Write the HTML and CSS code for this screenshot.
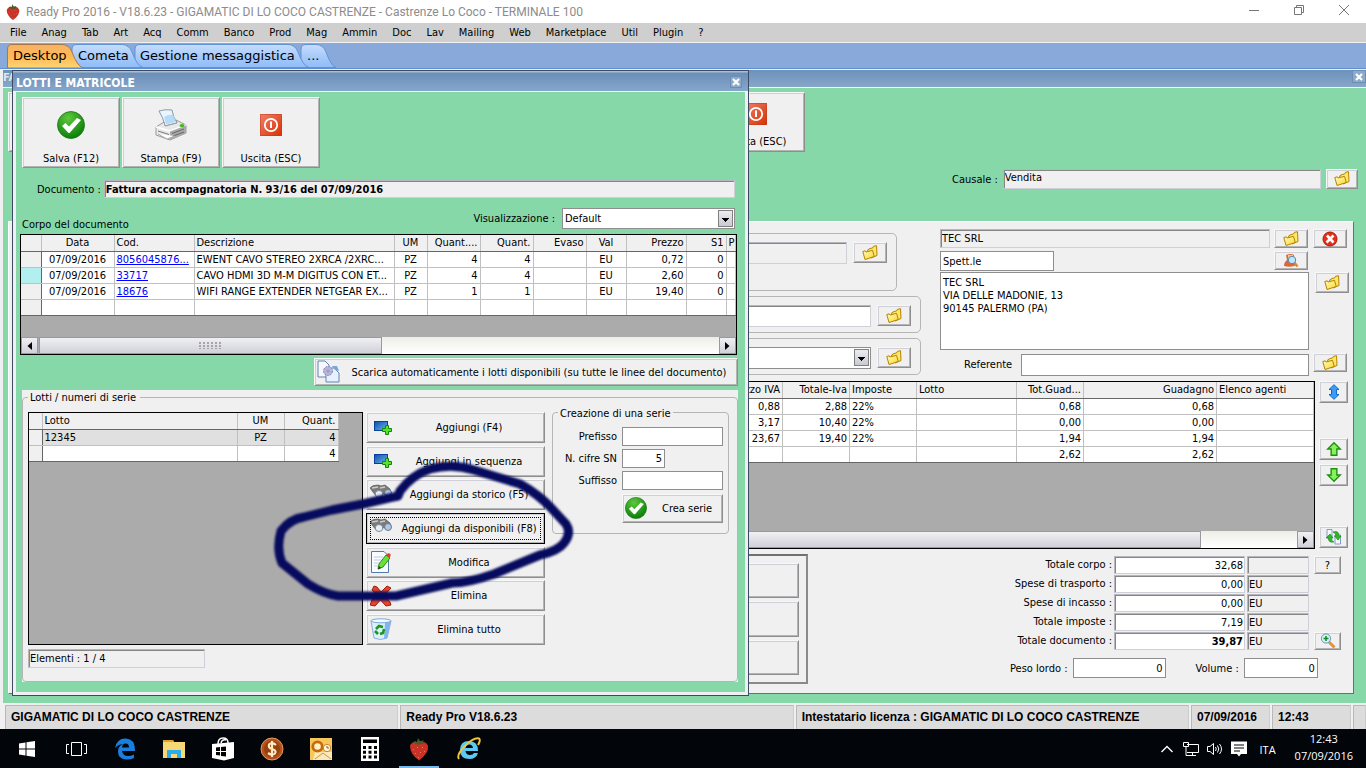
FILE: index.html
```html
<!DOCTYPE html>
<html lang="it">
<head>
<meta charset="utf-8">
<title>Ready Pro 2016</title>
<link rel="stylesheet" href="styles.css">
</head>
<body>
<svg class="defs" aria-hidden="true">
  <defs>
    <linearGradient id="gYellow" x1="0" y1="0" x2="1" y2="1"><stop offset="0" stop-color="#fffbc8"/><stop offset="1" stop-color="#fbd722"/></linearGradient>
    <linearGradient id="gRed" x1="0" y1="0" x2="1" y2="1"><stop offset="0" stop-color="#f0806a"/><stop offset="1" stop-color="#d83000"/></linearGradient>
    <radialGradient id="gGreen" cx=".4" cy=".25" r=".8"><stop offset="0" stop-color="#5cc83c"/><stop offset="1" stop-color="#067a06"/></radialGradient>
    <linearGradient id="gBlue" x1="0" y1="0" x2="1" y2="1"><stop offset="0" stop-color="#0b4fae"/><stop offset="1" stop-color="#6db4f2"/></linearGradient>
    <linearGradient id="gTab" x1="0" y1="0" x2="0" y2="1"><stop offset="0" stop-color="#c6ddfd"/><stop offset=".5" stop-color="#a9cbfa"/><stop offset="1" stop-color="#8fbcf8"/></linearGradient>
    <linearGradient id="gTabOn" x1="0" y1="0" x2="0" y2="1"><stop offset="0" stop-color="#f8b168"/><stop offset=".5" stop-color="#fdb955"/><stop offset="1" stop-color="#fdd670"/></linearGradient>
  </defs>
  <symbol id="i-folder" viewBox="0 0 16 16"><path d="M5.500 5 L8 3.500 L10.500 3 L11.500 1.300 L14.500 .7 L15 10.500 L9 13Z" fill="#fbe76a" stroke="#b58300"/><path d="M.8 6.500 L3.300 5.800 L4 7 L10.500 5.300 L12.300 11.500 L3 14.500Z" fill="url(#gYellow)" stroke="#b58300"/></symbol>
  <symbol id="i-power" viewBox="0 0 22 22"><rect width="22" height="22" rx="1.500" fill="url(#gRed)" stroke="#b83a1c"/><circle cx="11" cy="11" r="6.200" fill="none" stroke="#fff" stroke-width="1.800"/><path d="M11 7.500V14" stroke="#fff" stroke-width="2"/></symbol>
  <symbol id="i-check" viewBox="0 0 28 28"><circle cx="14" cy="14" r="13.500" fill="url(#gGreen)" stroke="#147a10" stroke-width=".8"/><path d="M5 15 L8.500 12 L12 15.500 L20 7 L24 9 L13 21.500 Q12 22.500 11 21.500Z" fill="#fff"/></symbol>
  <symbol id="i-printer" viewBox="0 0 32 32"><path d="M4 2 Q10 0 17 1 Q18 8 22 14 L10 17 Q8 8 4 2Z" fill="#eaf6ff" stroke="#8a99a8"/><path d="M9 8 Q14 5 18 6 L21 13 L11 15.500Z" fill="#b4dcf7"/><path d="M1 18 L9 13 L10 17 L22 14 L21 11 L31 16 L31 24 L15 31 L1 26Z" fill="#e9e9e9" stroke="#999"/><path d="M1 18 L15 22 L31 16" fill="none" stroke="#fff" stroke-width="1.500"/><path d="M15 22.500 L31 16.500 L31 24 L15 31Z" fill="#a9a9a9"/><path d="M17 24.500 L29 20 M17 27.500 L29 23" stroke="#666"/><path d="M3 22 L14 25.500" stroke="#777"/><path d="M3 25 L12 30 L20 27" fill="#fff" stroke="#aaa"/><ellipse cx="27" cy="16.500" rx="2.500" ry="1.500" fill="#40b818"/></symbol>
  <symbol id="i-add" viewBox="0 0 18 14"><rect x=".5" y=".5" width="13" height="9" fill="url(#gBlue)" stroke="#0a3f96"/><path d="M11.500 4.500h3v3h3v3h-3v3h-3v-3h-3v-3h3z" fill="#57e230" stroke="#148408"/></symbol>
  <symbol id="i-bino" viewBox="0 0 22 15"><path d="M0 4 Q2 1 8 1 L11 2 L15 1 L20 5 L21 9 L14 10 L9 8 L7 13 L3 8Z" fill="#7b7b7b" stroke="#555" stroke-width=".7"/><path d="M2 4 L8 3 M10 4 L15 3" stroke="#ccc" stroke-width="1.500"/><ellipse cx="9" cy="10" rx="3.800" ry="3.500" fill="#e0efff" stroke="#888"/><ellipse cx="18" cy="9" rx="3.500" ry="3.500" fill="#a9c8f3" stroke="#777"/></symbol>
  <symbol id="i-edit" viewBox="0 0 20 22"><path d="M.5 .5H13L17.500 5V21.500H.500Z" fill="#f8fbff" stroke="#5278ae"/><path d="M3 6h9M3 9h9M3 12h6M3 15h4" stroke="#c3cad9"/><path d="M7 18 L8 13 L15 4 L19 7 L12 16Z" fill="#6be038" stroke="#2c8c14"/><path d="M7 18.500 L8 15 L10 17Z" fill="#333"/><path d="M15 4 Q17 1 19.500 3 Q20 5 18.500 7Z" fill="#e23b28"/></symbol>
  <symbol id="i-cross" viewBox="0 0 22 22"><path d="M4 1 L7 2 L11 7 L17 1 L21 3 L14 10.500 L20 17 L21 20 L16 21 L10.500 15 L5 21 L0 20 L2 15 L7 10.500 L2 5Z" fill="#ea4426" stroke="#9c2010"/></symbol>
  <symbol id="i-bin" viewBox="0 0 22 22"><path d="M1 3 L4 20 Q10 23 17 20 L21 3Z" fill="#ddeeff" stroke="#87b0dd"/><path d="M15 5 L21 3 L17 20 L14 21Z" fill="#7fb6ec"/><ellipse cx="11" cy="2.800" rx="10" ry="2" fill="#f5faff" stroke="#7aa8dc"/><path d="M6 11 L9 8 L13 9 M14 11 L13 15 L10 16 M8 16 L5 13" fill="none" stroke="#179a17" stroke-width="2.600"/></symbol>
  <symbol id="i-pages" viewBox="0 0 24 24"><path d="M1 1H8L12 5V17H1Z" fill="#f5f9ff" stroke="#6581b4"/><path d="M9 8H17L22 13V22H9Z" fill="#e8f2ff" stroke="#6581b4"/><path d="M15 6 L20 6 L22 11 L18 10" fill="#7aa5da"/><circle cx="11" cy="11" r="4.500" fill="#b6b4d8" stroke="#8987b6" stroke-dasharray="2 1"/><circle cx="11" cy="11" r="1.500" fill="#9c9ac4"/></symbol>
  <symbol id="i-stop" viewBox="0 0 16 16"><circle cx="8" cy="8" r="7" fill="#e3301c" stroke="#b81404"/><path d="M5 4.500l6.500 7M11.500 4.500L4.500 11.500" stroke="#fff" stroke-width="2.600"/></symbol>
  <symbol id="i-person" viewBox="0 0 16 16"><path d="M3 2 Q8 0 11 2 V6 L14 12 Q8 15 1 13 Q1 9 4 7Z" fill="#d8673a"/><rect x="5" y="2" width="5" height="5" fill="#f3c78a"/><circle cx="9" cy="7" r="3.700" fill="#bfe5fb" stroke="#5c87a6"/><path d="M11.500 10 L14.500 13.500" stroke="#e0862a" stroke-width="2.500"/></symbol>
  <symbol id="i-updown" viewBox="0 0 12 16"><path d="M6 .7 L11 5.500 H8.500 V10.500 H11 L6 15.300 L1 10.500 H3.500 V5.500 H1Z" fill="#3a9cf5" stroke="#1768c0"/></symbol>
  <symbol id="i-up" viewBox="0 0 14 14"><path d="M7 1.500 L12.500 7 H9.500 V12.500 H4.500 V7 H1.500Z" fill="#86f25a" stroke="#1f8d10" stroke-width="1.200"/></symbol>
  <symbol id="i-swap" viewBox="0 0 16 16"><path d="M1 .5H6V9H1ZM9 6H14.500V15H9Z" fill="#f4f8ff" stroke="#7f9cc6"/><path d="M0 9 L4 5 L7 9 H5.500 Q5 12 8 13 Q2 14 2.500 9Z M15 7 L12 11 L8.500 7 H10 Q10 4 7 3 Q13 1 13 7Z" fill="#30b828" stroke="#158010" stroke-width=".6"/></symbol>
  <symbol id="i-zoomin" viewBox="0 0 16 16"><path d="M9 9 L14.500 14.500" stroke="#e0943a" stroke-width="3"/><circle cx="6" cy="5.500" r="4.600" fill="#d4efff" stroke="#6d97ac"/><path d="M6 3v5M3.500 5.500h5" stroke="#159020" stroke-width="1.600"/></symbol>
  <symbol id="i-berry" viewBox="0 0 20 24"><path d="M1 9 Q2 4 9 6 Q17 3 19 9 Q20 16 10 23.500 Q1 17 1 9Z" fill="#c93326"/><path d="M4 12l1 1M8 10l1 1M13 10l1 1M6 16l1 1M11 15l1 1M15 14l1 1M9 20l1 1" stroke="#e8776a"/><path d="M3 6 L6 4 L8 5 L9 1 L11 4 L15 3.500 L14 5 L17 6.500 L12 7 L9 8 L7 6.500Z" fill="#4c5a2a"/></symbol>
  <symbol id="i-x" viewBox="0 0 8 8"><path d="M1 1l6 6M7 1L1 7" stroke="#fff" stroke-width="2.200"/></symbol>
  <symbol id="i-left" viewBox="0 0 5 8"><path d="M5 0V8L.5 4Z"/></symbol>
  <symbol id="i-right" viewBox="0 0 5 8"><path d="M0 0V8L4.500 4Z"/></symbol>
</svg>

<div class="app">
  <header class="titlebar">
    <svg class="ic-berry"><use href="#i-berry"/></svg>
    <h1>Ready Pro 2016 - V18.6.23 - GIGAMATIC DI LO COCO CASTRENZE - Castrenze Lo Coco - TERMINALE 100</h1>
    <div class="winbtns">
      <button aria-label="Riduci"><svg viewBox="0 0 10 10"><path d="M0 5.500h10"/></svg></button>
      <button aria-label="Ripristina"><svg viewBox="0 0 10 10"><path d="M.5 2.500h7v7h-7zM2.500 2.500v-2h7v7h-2"/></svg></button>
      <button aria-label="Chiudi"><svg viewBox="0 0 10 10"><path d="M0 0l10 10M10 0L0 10"/></svg></button>
    </div>
  </header>

  <nav class="menu">
    <button>File</button><button>Anag</button><button>Tab</button><button>Art</button><button>Acq</button><button>Comm</button><button>Banco</button><button>Prod</button><button>Mag</button><button>Ammin</button><button>Doc</button><button>Lav</button><button>Mailing</button><button>Web</button><button>Marketplace</button><button>Util</button><button>Plugin</button><button>?</button>
  </nav>

  <nav class="tabs">
    <svg class="tabshapes" viewBox="0 0 340 25" width="340" height="25" aria-hidden="true">
      <path d="M301 24.500V6Q301 1.500 306 1.500H316Q323 1.500 326 9Q331 23 336 24.500Z" fill="url(#gTab)" stroke="#5f93d8"/>
      <path d="M135 24.500V6Q135 1.500 140 1.500H288Q295 1.500 298 9Q303 23 309 24.500Z" fill="url(#gTab)" stroke="#5f93d8"/>
      <path d="M72 24.500V6Q72 1.500 77 1.500H122Q129 1.500 132 9Q137 23 143 24.500Z" fill="url(#gTab)" stroke="#5f93d8"/>
      <path d="M7.500 25V6Q7.500 1.500 12 1.500H62Q69 1.500 72 9Q77 23 83 25Z" fill="url(#gTabOn)" stroke="#a8784a"/>
    </svg>
    <button class="t1">Desktop</button><button class="t2">Cometa</button><button class="t3">Gestione messaggistica</button><button class="t4">...</button>
  </nav>

  <main class="mdi">
    <section class="win">
      <div class="wintitle"><h2>FA</h2><button class="close" aria-label="Chiudi documento"><svg><use href="#i-x"/></svg></button></div>
      <div class="winbody">
        <div class="tools back">
          <span class="stub raised"></span>
          <button class="tool raised"><svg class="ic22"><use href="#i-power"/></svg><span>Uscita (ESC)</span></button>
        </div>
        <div class="causale">
          <label for="causale">Causale :</label>
          <input id="causale" class="sunk" value="Vendita" readonly>
          <button class="raised mini" aria-label="Scegli causale"><svg class="ic16"><use href="#i-folder"/></svg></button>
        </div>
        <div class="sheet">
          <div class="upper">
            <div class="groups">
              <div class="grp g1"><input class="sunk" aria-label="Numero" readonly><button class="raised mini" aria-label="Apri"><svg class="ic16"><use href="#i-folder"/></svg></button></div>
              <div class="grp g2"><input class="sunk white" aria-label="Pagamento"><button class="raised mini" aria-label="Apri"><svg class="ic16"><use href="#i-folder"/></svg></button></div>
              <div class="grp g3"><select class="combo" aria-label="Listino"><option></option></select><button class="raised mini" aria-label="Apri"><svg class="ic16"><use href="#i-folder"/></svg></button></div>
            </div>
            <div class="client">
              <input class="sunk name" aria-label="Cliente" value="TEC SRL" readonly>
              <button class="raised mini" aria-label="Scegli cliente"><svg class="ic16"><use href="#i-folder"/></svg></button>
              <button class="raised mini" aria-label="Togli cliente"><svg class="ic16"><use href="#i-stop"/></svg></button>
              <input class="flat short" aria-label="Titolo" value="Spett.le">
              <button class="raised mini" aria-label="Dettagli cliente"><svg class="ic16"><use href="#i-person"/></svg></button>
              <span></span>
              <textarea class="flat wide" aria-label="Indirizzo">TEC SRL
VIA DELLE MADONIE, 13
90145 PALERMO (PA)</textarea>
              <button class="raised mini off" aria-label="Scegli indirizzo"><svg class="ic16"><use href="#i-folder"/></svg></button>
              <div class="wide ref"><label for="ref">Referente</label><input id="ref" class="flat"></div>
              <button class="raised mini" aria-label="Scegli referente"><svg class="ic16"><use href="#i-folder"/></svg></button>
            </div>
          </div>
          <div class="middle">
            <div class="grid">
              <table>
                <colgroup><col><col class="w67"><col class="w67"><col class="w67"><col class="w100"><col class="w67"><col class="w133"><col class="w97"></colgroup>
                <thead><tr><th></th><th class="r">Prezzo IVA</th><th class="r">Totale-Iva</th><th>Imposte</th><th>Lotto</th><th class="r">Tot.Guad...</th><th class="r">Guadagno</th><th>Elenco agenti</th></tr></thead>
                <tbody>
                  <tr><td></td><td class="r">0,88</td><td class="r">2,88</td><td>22%</td><td></td><td class="r">0,68</td><td class="r">0,68</td><td></td></tr>
                  <tr><td></td><td class="r">3,17</td><td class="r">10,40</td><td>22%</td><td></td><td class="r">0,00</td><td class="r">0,00</td><td></td></tr>
                  <tr><td></td><td class="r">23,67</td><td class="r">19,40</td><td>22%</td><td></td><td class="r">1,94</td><td class="r">1,94</td><td></td></tr>
                  <tr><td></td><td></td><td></td><td></td><td></td><td class="r">2,62</td><td class="r">2,62</td><td></td></tr>
                </tbody>
              </table>
              <div class="hscroll"><span class="thumb long"></span><span class="track"></span><button aria-label="Scorri a destra"><svg><use href="#i-right"/></svg></button></div>
            </div>
            <div class="side">
              <button class="raised mini" aria-label="Espandi"><svg class="ic16"><use href="#i-updown"/></svg></button>
              <button class="raised mini" aria-label="Sposta su"><svg class="ic16"><use href="#i-up"/></svg></button>
              <button class="raised mini" aria-label="Sposta giù"><svg class="ic16 flip"><use href="#i-up"/></svg></button>
              <button class="raised mini" aria-label="Scambia"><svg class="ic16"><use href="#i-swap"/></svg></button>
            </div>
          </div>
          <div class="lower">
            <div class="stack"><span class="raised"></span><span class="raised"></span><span class="raised"></span></div>
            <div class="totals">
              <div class="sums">
                <label for="s1">Totale corpo :</label><input id="s1" class="sunk white r" value="32,68"><input class="sunk" aria-label="Valuta corpo" readonly><button class="raised mini">?</button>
                <label for="s2">Spese di trasporto :</label><input id="s2" class="sunk white r" value="0,00"><input class="sunk" aria-label="Valuta trasporto" value="EU" readonly><span></span>
                <label for="s3">Spese di incasso :</label><input id="s3" class="sunk white r" value="0,00"><input class="sunk" aria-label="Valuta incasso" value="EU" readonly><span></span>
                <label for="s4">Totale imposte :</label><input id="s4" class="sunk white r" value="7,19"><input class="sunk" aria-label="Valuta imposte" value="EU" readonly><span></span>
                <label for="s5">Totale documento :</label><input id="s5" class="sunk white r b" value="39,87"><input class="sunk" aria-label="Valuta documento" value="EU" readonly><button class="raised mini" aria-label="Ingrandisci"><svg class="ic16"><use href="#i-zoomin"/></svg></button>
              </div>
              <div class="weights">
                <label for="peso">Peso lordo :</label><input id="peso" class="flat r" value="0">
                <label for="vol" class="vol">Volume :</label><input id="vol" class="flat r v" value="0">
              </div>
            </div>
          </div>
        </div>
      </div>
    </section>

    <section class="dialog" role="dialog" aria-labelledby="dlgtitle">
      <div class="dlghead"><h2 id="dlgtitle">LOTTI E MATRICOLE</h2><button class="close" aria-label="Chiudi"><svg><use href="#i-x"/></svg></button></div>
      <div class="dlgbody">
        <div class="tools">
          <button class="tool raised"><svg class="ic28"><use href="#i-check"/></svg><span>Salva (F12)</span></button>
          <button class="tool raised"><svg class="ic32"><use href="#i-printer"/></svg><span>Stampa (F9)</span></button>
          <button class="tool raised"><svg class="ic22"><use href="#i-power"/></svg><span>Uscita (ESC)</span></button>
        </div>
        <div class="docrow"><label for="doc">Documento :</label><input id="doc" class="sunk b" value="Fattura accompagnatoria N. 93/16 del 07/09/2016" readonly></div>
        <div class="viewrow"><span class="cap">Corpo del documento</span><label for="vis">Visualizzazione :</label><select id="vis" class="combo"><option>Default</option></select></div>
        <div class="grid first">
          <table>
            <colgroup><col class="w20"><col class="w73"><col class="w80"><col class="w200"><col class="w33"><col class="w53"><col class="w53"><col class="w53"><col class="w40"><col class="w60"><col class="w40"><col></colgroup>
            <thead><tr><th></th><th class="c">Data</th><th>Cod.</th><th>Descrizione</th><th class="c">UM</th><th class="r">Quant....</th><th class="r">Quant.</th><th class="r">Evaso</th><th class="c">Val</th><th class="r">Prezzo</th><th class="r">S1</th><th>P</th></tr></thead>
            <tbody>
              <tr><th></th><td class="c">07/09/2016</td><td><a href="#">8056045876...</a></td><td>EWENT CAVO STEREO 2XRCA /2XRC...</td><td class="c">PZ</td><td class="r">4</td><td class="r">4</td><td></td><td class="c">EU</td><td class="r">0,72</td><td class="r">0</td><td></td></tr>
              <tr><th class="cur"></th><td class="c">07/09/2016</td><td><a href="#">33717</a></td><td>CAVO HDMI 3D M-M DIGITUS CON ET...</td><td class="c">PZ</td><td class="r">4</td><td class="r">4</td><td></td><td class="c">EU</td><td class="r">2,60</td><td class="r">0</td><td></td></tr>
              <tr><th></th><td class="c">07/09/2016</td><td><a href="#">18676</a></td><td>WIFI RANGE EXTENDER NETGEAR EX...</td><td class="c">PZ</td><td class="r">1</td><td class="r">1</td><td></td><td class="c">EU</td><td class="r">19,40</td><td class="r">0</td><td></td></tr>
              <tr><th></th><td></td><td></td><td></td><td></td><td></td><td></td><td></td><td></td><td></td><td></td><td></td></tr>
            </tbody>
          </table>
          <div class="hscroll"><button aria-label="Scorri a sinistra"><svg><use href="#i-left"/></svg></button><span class="thumb"><i class="grip"></i></span><span class="track"></span><button aria-label="Scorri a destra"><svg><use href="#i-right"/></svg></button></div>
        </div>
        <button class="raised auto"><svg class="ic24"><use href="#i-pages"/></svg><span>Scarica automaticamente i lotti disponibili (su tutte le linee del documento)</span></button>
        <fieldset class="lots">
          <legend>Lotti / numeri di serie</legend>
          <div class="lotcol">
            <div class="grid lotgrid">
              <table>
                <colgroup><col class="w13"><col class="w195"><col class="w47"><col class="w54"></colgroup>
                <thead><tr><th></th><th>Lotto</th><th class="c">UM</th><th class="r">Quant.</th></tr></thead>
                <tbody>
                  <tr class="sel"><th></th><td>12345</td><td class="c">PZ</td><td class="r">4</td></tr>
                  <tr><th></th><td></td><td></td><td class="r">4</td></tr>
                </tbody>
              </table>
            </div>
            <output class="sunk elem">Elementi : 1 / 4</output>
          </div>
          <div class="acts">
            <button class="raised"><svg class="add"><use href="#i-add"/></svg><span>Aggiungi (F4)</span></button>
            <button class="raised"><svg class="add"><use href="#i-add"/></svg><span>Aggiungi in sequenza</span></button>
            <button class="raised"><svg class="bino"><use href="#i-bino"/></svg><span>Aggiungi da storico (F5)</span></button>
            <button class="raised focus"><svg class="bino"><use href="#i-bino"/></svg><span>Aggiungi da disponibili (F8)</span></button>
            <button class="raised"><svg class="ic22"><use href="#i-edit"/></svg><span>Modifica</span></button>
            <button class="raised"><svg class="ic22"><use href="#i-cross"/></svg><span>Elimina</span></button>
            <button class="raised"><svg class="ic22"><use href="#i-bin"/></svg><span>Elimina tutto</span></button>
          </div>
          <fieldset class="serie">
            <legend>Creazione di una serie</legend>
            <label for="pre">Prefisso</label><input id="pre" class="flat">
            <label for="cif">N. cifre SN</label><input id="cif" class="flat r n" value="5">
            <label for="suf">Suffisso</label><input id="suf" class="flat">
            <button class="raised crea"><svg class="ic22"><use href="#i-check"/></svg><span>Crea serie</span></button>
          </fieldset>
        </fieldset>
      </div>
      <svg class="ink" viewBox="0 0 310 150" width="310" height="150" aria-hidden="true">
        <path d="M130 39 L132 34 Q144 18 162 12 Q184 6 206 13 L252 27 Q272 38 286 54 L298 67 Q304 76 296 86 Q290 94 272 98 L226 117 Q200 126 184 126 L128 139 H70 Q56 137 40 127 L14 106 Q8 92 13 74 Q22 62 36 60 L64 53 L95 47 Q116 42 130 39"/>
      </svg>
    </section>
  </main>

  <footer class="status">
    <span>GIGAMATIC DI LO COCO CASTRENZE</span><span>Ready Pro V18.6.23</span><span>Intestatario licenza : GIGAMATIC DI LO COCO CASTRENZE</span><span class="st">07/09/2016</span><span class="st">12:43</span><span class="end"></span>
  </footer>

  <footer class="taskbar">
    <button aria-label="Start"><svg viewBox="0 0 24 24"><path d="M4 6.500L10.500 5.500V11.500H4ZM11.500 5.300L20 4V11.500H11.500ZM4 12.500H10.500V18.500L4 17.500ZM11.500 12.500H20V20L11.500 18.700Z" fill="#fff"/></svg></button>
    <button aria-label="Visualizzazione attività"><svg viewBox="0 0 24 24"><path d="M7.500 5.500h10v13h-10zM5 7.500H2.500v9H5M20 7.500h2.500v9H20" fill="none" stroke="#fff"/></svg></button>
    <button aria-label="Edge"><svg viewBox="0 0 24 24"><path d="M2 11Q4 1 13 1.500Q22 2 22 13V14H9Q10 19 15 19Q18 19 21 17.500V21Q17 23 13 22.500Q5 22 5 14.500Q5 9 10 7Q5 7.500 2 11ZM9 10.500H16Q16 6.500 12.500 6.500Q9.500 6.500 9 10.500Z" fill="#1a7fdc"/></svg></button>
    <button aria-label="Esplora file"><svg viewBox="0 0 24 24"><path d="M1 3H11L12 5H23V21H1Z" fill="#f8d775"/><path d="M1 3H11L12 5H1Z" fill="#d9a528"/><path d="M5 21V13H19V21H15V17H9V21Z" fill="#2cacec"/></svg></button>
    <button aria-label="Store"><svg viewBox="0 0 24 24"><path d="M1 7L23 5V21L13 23.500L1 21Z" fill="#fff"/><path d="M7 7Q7 1 12 1Q17 1 17 6M10 6Q11 2 15 3" fill="none" stroke="#fff" stroke-width="1.500"/><path d="M5 10.500L9 10V14H5ZM10 10L15 9.500V14H10ZM5 15H9V18.500L5 18ZM10 15H15V19.500L10 19Z" fill="#000"/></svg></button>
    <button aria-label="Gestione denaro"><svg viewBox="0 0 24 24"><circle cx="12" cy="12" r="11" fill="#b4521c" stroke="#e79a62"/><circle cx="12" cy="12" r="8" fill="#96400e"/><path d="M16 8Q12 4.500 9 7.500Q8 11 12 12Q17 13.500 15 16.500Q12 19 8 16M12 4V20" fill="none" stroke="#ffe9c0" stroke-width="2.200"/></svg></button>
    <button aria-label="Outlook"><svg viewBox="0 0 24 24"><rect x="1" y="1" width="22" height="22" fill="#f8c75a"/><path d="M6 15H23V23H4Z" fill="#fbe9bd"/><path d="M6 22L14 16L22 22" fill="none" stroke="#d9961c"/><circle cx="8.500" cy="9.500" r="4.700" fill="#fff0c4" stroke="#c66a0c" stroke-width="2.800"/><circle cx="18" cy="11" r="3.700" fill="#fff6dd" stroke="#c78728"/><path d="M18 9V11H20" stroke="#a06010" fill="none"/></svg></button>
    <button aria-label="Calcolatrice"><svg viewBox="0 0 24 24"><path d="M3 0H21V24H3Z" fill="#fff"/><path d="M5 2.500H19V6H5ZM5 9h3v3H5zM10.500 9h3v3h-3zM16 9h3v3h-3zM5 13.800h3v3H5zM10.500 13.800h3v3h-3zM16 13.800h3v3h-3zM5 18.600h3v3H5zM10.500 18.600h3v3h-3zM16 18.600h3v3h-3z" fill="#000"/></svg></button>
    <button class="on" aria-label="Ready Pro"><svg><use href="#i-berry"/></svg></button>
    <button aria-label="Internet Explorer"><svg viewBox="0 0 24 24"><path d="M3 13Q3 4 12 4Q21 4 21 14H8.500Q9 18 13 18Q16 18 17 16H21Q19 22 12.500 22Q3 22 3 13ZM8.500 11H16Q15.500 7.500 12.300 7.500Q9 7.500 8.500 11Z" fill="#5cc8f4"/><path d="M2 22Q-1 18 8 9Q17 0 22 1.500Q24 3 21 8" fill="none" stroke="#f2c53a" stroke-width="2"/></svg></button>
    <div class="tray">
      <svg viewBox="0 0 16 16"><path d="M2.500 11L8 5.500L13.500 11" fill="none" stroke="#fff" stroke-width="1.400"/></svg>
      <svg viewBox="0 0 16 16"><path d="M4 3.500H15.500V11.500H4M9.500 11.500V14M6 14.500H13M.5 1.500h5v4h-5zM3 5.500V14.500H6" fill="none" stroke="#fff"/></svg>
      <svg viewBox="0 0 16 16"><path d="M.5 5.500H3L6.500 2.500V13.500L3 10.500H.500ZM8.500 6Q10 8 8.500 10M10.500 4.500Q13 8 10.500 11.500M12.500 3Q16.500 8 12.500 13" fill="none" stroke="#fff"/></svg>
      <svg viewBox="0 0 16 16"><path d="M0 .5H16V13H10L8 15.500L6 13H0Z" fill="#fff"/><path d="M3 4h10M3 7h10M3 10h6" stroke="#000"/></svg>
      <span class="lang">ITA</span>
      <span class="clock">12:43<br>07/09/2016</span>
    </div>
  </footer>
</div>
</body>
</html>
```
FILE: styles.css
```css
:root {
  --ui: "DejaVu Sans Condensed", "Noto Sans", sans-serif;
  --face: #f0f0f0;
  --green: #87d8a8;
  --line: #c0c0c0;
}
* { box-sizing: border-box; }
body { margin: 0; font: 11px/13px var(--ui); color: #000; background: #f0f0f0; }
button, input, select, textarea { font: inherit; color: inherit; margin: 0; border-radius: 0; }
button { padding: 0; border: 0; background: none; }
input, textarea, select { min-width: 0; outline: 0; }
h1, h2 { margin: 0; font-size: inherit; }
svg { display: block; flex: none; }
.defs { position: absolute; width: 0; height: 0; }
.app { min-height: 100vh; display: flex; flex-direction: column; overflow: hidden; }
.r { text-align: right; }
.c { text-align: center; }
.b { font-weight: bold; }

.titlebar { height: 23px; display: flex; align-items: center; gap: 6px; padding-left: 6px; background: #fff; color: #8c8c8c; }
.titlebar h1 { font: 12px/16px Roboto, sans-serif; flex: 1; white-space: nowrap; }
.ic-berry { width: 14px; height: 18px; }
.winbtns { display: flex; align-self: flex-start; }
.winbtns button { width: 45px; height: 20px; display: grid; place-items: center; }
.winbtns svg { width: 10px; height: 10px; fill: none; stroke: #777; }

.menu { height: 19px; display: flex; align-items: center; gap: 15px; padding-left: 10px; background: #cfcfcf; }
.tabs { position: relative; height: 27px; border-top: 1px solid #f0f0f0; border-bottom: 1px solid #5f8fd0; background: #88a9d9; display: flex; font: 13px/25px "DejaVu Sans", sans-serif; }
.tabshapes { position: absolute; left: 0; top: 0; }
.tabs button { position: relative; text-align: left; }
.t1 { margin-left: 13px; width: 65px; }
.t2 { width: 62px; }
.t3 { width: 167px; }

.mdi { position: relative; flex: 1; padding: 1px 0 0 3px; }
.win { display: flex; flex-direction: column; height: 100%; }
.wintitle { height: 18px; display: flex; justify-content: space-between; background: linear-gradient(#6d92ba, #87a6ca); border-bottom: 1px solid #f4f4f4; color: #dde6f0; line-height: 16px; }
.close { display: grid; place-items: center; width: 14px; height: 13px; background: #8daac9; border: 1px solid #6c8eb4; }
.close svg { width: 8px; height: 8px; }
.winbody { flex: 1; background: var(--green); padding: 4px 12px 9px 5px; display: flex; flex-direction: column; }
.raised { background: var(--face); border: 1px solid; border-color: #f8f8f8 #8e8e8e #8e8e8e #f8f8f8; box-shadow: inset 1px 1px #cfcfd8, inset -1px -1px #b4b4b4; }
.sunk { background: var(--face); border: 1px solid; border-color: #b6b6bc #cfcfd8 #cfcfd8 #b6b6bc; box-shadow: inset 1px 1px #868686; padding: 0 1px; }
.flat { background: #fff; border: 1px solid #8e8e8e; padding: 0 2px; }
.white { background: #fff; }
.mini { width: 32px; height: 20px; display: grid; place-items: center; }
.ic16 { width: 16px; height: 16px; }
.ic22 { width: 22px; height: 22px; }
.ic24 { width: 24px; height: 24px; }
.ic28 { width: 28px; height: 28px; }
.ic32 { width: 32px; height: 32px; }
.flip { transform: rotate(180deg); }
.tools { display: flex; gap: 2px; }
.tool { width: 98px; height: 71px; display: grid; grid-template-rows: 52px 14px; place-items: center; align-content: end; padding-bottom: 2px; }
.tools.back { justify-content: space-between; width: 797px; height: 60px; }
.tools.back .tool { height: 60px; grid-template-rows: 40px 14px; padding-bottom: 3px; }
.stub { width: 97px; }
.causale { display: flex; align-items: center; margin: 17px -4px 32px 944px; gap: 5px; }
.causale label { white-space: nowrap; }
.causale input { flex: 1; height: 20px; padding-bottom: 3px; }

.sheet { flex: 1; background: var(--face); border: 1px solid; border-color: #fff #6e6e6e #6e6e6e #fff; padding: 7px 5px 9px 7px; display: flex; flex-direction: column; }
.upper { display: flex; height: 152px; }
.groups { width: 924px; display: flex; flex-direction: column; gap: 5px; padding: 4px 19px 0 0; }
.grp { display: flex; gap: 6px; border: 1px solid #b5b5b5; border-radius: 5px; padding: 8px 9px; }
.grp .sunk, .grp .combo { flex: 1; height: 22px; }
.grp .mini { width: 34px; height: 21px; }
.g1 { height: 58px; margin-right: 24px; }
.g2, .g3 { height: 37px; }
.client { flex: 1; display: grid; grid-template-columns: 1fr 35px 35px; grid-template-rows: 21px 20px 80px 23px; column-gap: 4px; row-gap: 1px; align-content: start; }
.client .mini { width: 34px; height: 19px; }
.client .mini.off { margin-left: 2px; height: 21px; }
.client .name { height: 19px; }
.client .short { width: 114px; }
.wide { grid-column: span 2; }
.client textarea { resize: none; line-height: 13px; padding: 3px 2px; overflow: hidden; height: 78px; }
.ref { display: flex; align-items: center; gap: 9px; padding-left: 24px; }
.ref input { flex: 1; height: 22px; }

.middle { display: flex; gap: 4px; }
.grid { flex: 1; display: flex; flex-direction: column; justify-content: space-between; height: 168px; border: 1px solid #000; background: #ababab; overflow: hidden; }
table { border-collapse: collapse; table-layout: fixed; width: 100%; }
td, th { height: 16px; padding: 0 2px; font-weight: normal; text-align: left; line-height: 15px; white-space: nowrap; overflow: hidden; }
td { background: #fff; border-right: 1px solid var(--line); border-bottom: 1px solid var(--line); }
th { background: var(--face); border-right: 1px solid var(--line); border-bottom: 1px solid var(--line); }
thead th { border-bottom: 1px solid #666; }
tbody tr:last-child > * { border-bottom: 1px solid #666; }
td.r, th.r { text-align: right; }
td.c, th.c { text-align: center; }
tbody th { border-right-color: #666; }
th.cur { background: #b2efef; }
tr.sel td { background: #e0e0e0; }
a { color: #00f; text-decoration: underline; }
.w13 { width: 13px; } .w20 { width: 20px; } .w33 { width: 33px; } .w40 { width: 40px; } .w47 { width: 47px; }
.w53 { width: 53px; } .w54 { width: 54px; } .w60 { width: 60px; } .w67 { width: 67px; } .w73 { width: 73px; }
.w80 { width: 80px; } .w97 { width: 97px; } .w100 { width: 100px; } .w133 { width: 133px; } .w195 { width: 195px; } .w200 { width: 200px; }
.hscroll { display: flex; height: 17px; }
.hscroll button, .thumb { background: linear-gradient(#f0f0f4, #d0d1d9); border: 1px solid #9a9a9e; display: grid; place-items: center; }
.hscroll button { width: 17px; }
.hscroll svg { width: 5px; height: 8px; }
.thumb { width: 343px; margin-left: 1px; }
.thumb.long { flex: 1; }
.long + .track { flex: none; width: 96px; }
.track { flex: 1; background: linear-gradient(#eeeee8, #fff); }
.grip { width: 24px; height: 7px; background: radial-gradient(circle at 1px 1px, #a4a4aa 1px, transparent 1px) 0 0 / 4px 3px; }
.side { display: grid; grid-template-rows: 57px 26px 62px 22px; }
.side .mini { width: 29px; height: 22px; }
.lower { flex: 1; display: flex; justify-content: space-between; padding-top: 5px; }
.stack { width: 792px; height: 130px; border: 2px solid; border-color: #707070 #8a8a8a #8a8a8a #707070; padding: 7px; display: grid; gap: 3px; }
.totals { width: 340px; padding-top: 2px; }
.sums { display: grid; grid-template-columns: 104px 131px 62px 27px; grid-auto-rows: 18px; gap: 1px 2px; }
.sums label { text-align: right; line-height: 18px; }
.sums .mini { width: 27px; height: 18px; margin-left: 3px; }
.weights { display: flex; align-items: center; gap: 5px; margin-top: 8px; padding-left: 2px; white-space: nowrap; }
.weights input { width: 93px; height: 20px; }
.weights .v { width: 74px; }
.vol { margin-left: 25px; }

.combo {
  appearance: none; border: 1px solid #8e8e8e; height: 21px; padding: 0 2px;
  background:
    linear-gradient(#000, #000) right 5px top 9px / 7px 1px no-repeat,
    linear-gradient(#000, #000) right 6px top 10px / 5px 1px no-repeat,
    linear-gradient(#000, #000) right 7px top 11px / 3px 1px no-repeat,
    linear-gradient(#000, #000) right 8px top 12px / 1px 1px no-repeat,
    linear-gradient(#ececf0, #c9cad2) right 2px top 2px / 13px 15px no-repeat,
    linear-gradient(#808080, #808080) right 1px top 1px / 15px 17px no-repeat,
    #fff;
}

.dialog { position: absolute; left: 12px; top: 1px; width: 737px; height: 626px; border: 1px solid #3c4a63; background: #f0f0f4; padding: 0 3px 3px; display: flex; flex-direction: column; }
.dlghead { height: 21px; margin: 0 -3px; padding: 3px 6px 0 3px; display: flex; justify-content: space-between; background: linear-gradient(#a9bdd6 0 1px, #6b8fb8 2px, #86a6cc); border-bottom: 1px solid #f4f4f4; color: #fff; }
.dlghead h2 { font-size: 12px; line-height: 18px; }
.dlghead .close { width: 12px; height: 12px; margin-top: 2px; }
.dlgbody { flex: 1; background: var(--green); padding: 5px 7px 10px 6px; display: flex; flex-direction: column; }
.docrow, .viewrow { display: flex; align-items: center; margin-right: 3px; gap: 7px; }
.docrow { margin-top: 12px; padding-left: 15px; gap: 3px; }
.docrow input { flex: 1; height: 18px; }
.viewrow { margin-top: 10px; height: 21px; }
.cap { flex: 1; align-self: flex-end; margin-bottom: -2px; }
.viewrow .combo { width: 173px; }
.grid.first { flex: none; height: 121px; margin: 5px 1px 0 -2px; }
.auto { align-self: flex-end; width: 424px; height: 28px; margin-top: 3px; display: flex; align-items: center; padding-left: 2px; }
.auto span, .acts span { flex: 1; text-align: center; }
.lots { flex: 1; position: relative; margin: 4px 0 0; border: 0; min-width: 0; background: var(--face); display: flex; padding: 9px 9px 14px 6px; gap: 3px; }
.lots::before { content: ""; position: absolute; inset: 7px 0 0; border: 1px solid #b5b5b5; border-radius: 4px; pointer-events: none; }
.lots > legend { position: absolute; top: 1px; left: 6px; background: var(--face); padding: 0 4px 0 2px; }
.lotcol { width: 335px; padding-top: 13px; }
.lotgrid { height: 233px; justify-content: flex-start; }
.lotgrid table { width: 309px; }
.elem { display: block; width: 177px; height: 19px; line-height: 17px; margin-top: 4px; }
.acts { width: 179px; height: 233px; margin-top: 13px; display: flex; flex-direction: column; justify-content: space-between; }
.acts button { height: 31px; display: flex; align-items: center; gap: 5px; padding: 0 3px; position: relative; }
.acts .add { width: 18px; height: 14px; margin-left: 4px; }
.acts .bino { width: 22px; height: 15px; margin-bottom: 6px; }
.acts .focus { border: 1px solid #000; }
.focus::after { content: ""; position: absolute; inset: 3px; border: 1px dotted #000; }
.serie { position: relative; min-width: 0; width: 177px; height: 122px; margin: 13px 0 0 4px; border: 1px solid #b5b5b5; border-radius: 4px; padding: 13px 6px 0; display: grid; grid-template-columns: 58px 101px; grid-template-rows: 20px 19px 19px 30px; gap: 3px 5px; align-items: center; align-content: start; }
.serie legend { position: absolute; top: -6px; left: 5px; background: var(--face); padding: 0 3px 0 2px; }
.serie label { text-align: right; }
.serie input { height: 19px; width: 101px; }
.serie .n { width: 43px; }
.crea { grid-column: 2; height: 29px; display: flex; align-items: center; gap: 15px; padding-left: 2px; }
.ink { position: absolute; left: 255px; top: 386px; pointer-events: none; }
.ink path { fill: none; stroke: #070b5e; stroke-width: 9; stroke-linejoin: round; stroke-linecap: round; filter: blur(1px); }

.status { height: 26px; display: flex; gap: 2px; padding: 2px 0 0 5px; background: var(--face); font: bold 12px/23px "Liberation Sans", sans-serif; }
.status span { flex: 1; background: #dcdcdc; border: 1px solid #b8b8b8; border-right-color: #ccc; border-bottom: 0; padding-left: 5px; white-space: nowrap; }
.status .st { flex: 0 0 79px; }
.status .end { flex: 0 0 13px; padding: 0; }

.taskbar { height: 40px; background: #020509; display: flex; padding-left: 2px; color: #fff; }
.taskbar button { width: 49px; display: grid; place-items: center; }
.taskbar button svg { width: 24px; height: 24px; }
.taskbar .on { border-bottom: 3px solid #76b9ed; width: 40px; margin: 0 5px; padding-top: 3px; }
.tray { margin-left: auto; display: flex; align-items: center; gap: 8px; padding-right: 13px; font: 11px/17px "Open Sans", sans-serif; }
.tray svg { width: 16px; height: 16px; }
.lang { margin: 0 11px 0 5px; }
.clock { text-align: center; padding-bottom: 4px; }
```
